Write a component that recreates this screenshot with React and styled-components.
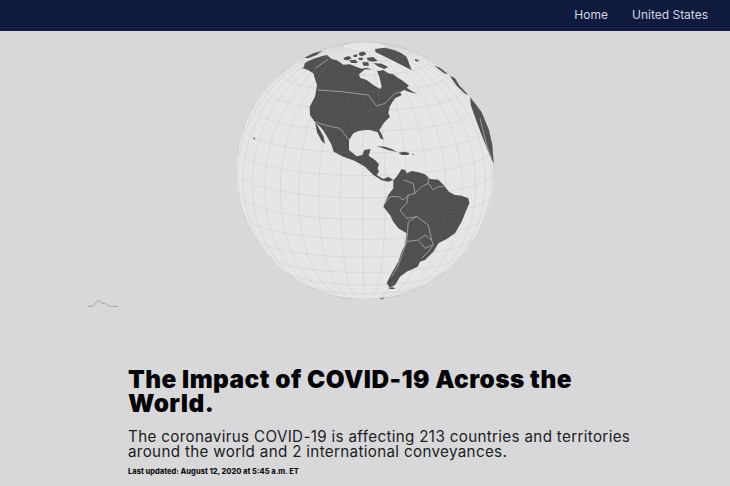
import React from "react";
import styled, { createGlobalStyle } from "styled-components";

const GlobalStyle = createGlobalStyle`
    html, body {
        margin: 0;
        height: 100%;
        overflow: hidden;
        background: #d8d8da;
        font-family: "Inter", "Liberation Sans", sans-serif;
    }
`;

const Page = styled.div`
    height: 486px;
    display: flex;
    flex-direction: column;
    background: #d8d8da;
`;

const Header = styled.header`
    height: 31px;
    flex: none;
    background: #0e1a3e;
    display: flex;
    align-items: center;
    justify-content: flex-end;
    gap: 24px;
    padding: 0 22px 2px 0;
    box-sizing: border-box;
`;

const NavLink = styled.a`
    color: #d5d8e2;
    font-size: 12px;
    font-weight: 400;
`;

const Hero = styled.section`
    position: relative;
    display: flex;
    justify-content: center;
    padding-top: 4px;
`;

const GlobeSvg = styled.svg`
    width: 280px;
    height: 270px;
    display: block;
`;

const Sphere = styled.circle`
    fill: #e6e6e8;
    stroke: #dadadc;
    stroke-width: 2;
`;

const Grid = styled.path`
    fill: none;
    stroke: rgba(130, 130, 135, 0.2);
    stroke-width: 2;
`;

const Land = styled.path`
    fill: #505050;
`;

const Lake = styled.path`
    fill: #e6e6e8;
`;

const Border = styled.path`
    fill: none;
    stroke: #ababab;
    stroke-width: 2.5;
    stroke-linejoin: round;
`;

const Spark = styled.svg`
    position: absolute;
    left: 87px;
    top: 266px;
    width: 32px;
    height: 12px;
`;

const Intro = styled.div`
    padding: 62px 90px 0 128px;
    color: #000;
`;

const Title = styled.h1`
    margin: 0;
    max-width: 460px;
    font-size: 24.4px;
    line-height: 24px;
    font-weight: 900;
    letter-spacing: 0.46px;
`;

const Lead = styled.p`
    margin: 14px 0 0;
    max-width: 510px;
    font-size: 15.2px;
    line-height: 15px;
    font-weight: 400;
    letter-spacing: 0.33px;
    color: #1c1c1e;
`;

const Updated = styled.p`
    margin: 8px 0 0;
    font-size: 7.5px;
    line-height: 10px;
    font-weight: 800;
    color: #111;
`;

// orthographic projection, in the svg's own units
const CX = 420;
const CY = 408;
const R = 387;
const LON0 = -89;
const LAT0 = 12;
const rad = Math.PI / 180;

function project(lon, lat) {
    const l = (lon - LON0) * rad;
    const p = lat * rad;
    const p0 = LAT0 * rad;
    const depth = Math.sin(p0) * Math.sin(p) + Math.cos(p0) * Math.cos(p) * Math.cos(l);
    const x = CX + R * Math.cos(p) * Math.sin(l);
    const y = CY - R * (Math.cos(p0) * Math.sin(p) - Math.sin(p0) * Math.cos(p) * Math.cos(l));
    return depth >= 0 ? [x, y] : null;
}

function line(points) {
    let d = "";
    let open = false;
    points.forEach(pt => {
        if (!pt) {
            open = false;
            return;
        }
        d += `${open ? "L" : "M"}${pt[0].toFixed(1)} ${pt[1].toFixed(1)}`;
        open = true;
    });
    return d;
}

function graticule() {
    let d = "";
    for (let lon = -180; lon < 180; lon += 10) {
        const pts = [];
        for (let lat = -80; lat <= 80; lat += 2) pts.push(project(lon, lat));
        d += line(pts);
    }
    for (let lat = -80; lat <= 80; lat += 10) {
        const pts = [];
        for (let lon = -180; lon <= 180; lon += 2) pts.push(project(lon, lat));
        d += line(pts);
    }
    return d;
}

const northAmerica =
    "M215 108L228 103L236 97L240 84L250 78L270 70L290 64L306 60L320 72L335 76L345 82L355 89L375 88L395 96L410 101L425 98L440 104L462 108L475 105L490 115L505 118L518 128L530 135L552 152L545 158L560 168L577 176L555 172L538 165L525 172L530 180L510 190L500 205L494 215L490 235L495 246L484 256L476 265L463 285L470 298L476 314L466 310L458 292L436 285L420 285L400 288L385 295L372 315L372 345L395 364L412 360L418 345L437 342L431 362L450 375L462 388L458 400L462 410L455 420L475 432L490 425L505 435L490 440L470 436L445 420L420 395L390 378L355 365L326 350L320 330L302 298L290 280L270 262L255 240L254 215L262 200L270 185L276 150L268 125L265 115L250 106L235 100Z";

const baja = "M270 260L285 285L296 305L300 326L290 318L276 292Z";
const hudson = "M402 118L420 103L455 105L463 125L470 155L465 162L445 150L425 135L405 128Z";
const greenland = "M450 42L480 38L510 46L530 55L545 66L552 85L560 106L530 90L500 75L470 60L452 52Z";
const alaskaTip = "M238 68L265 55L292 47L275 60L250 70Z";
const arctic =
    "M355 68L372 63L380 70L368 76L358 74ZM385 60L398 58L395 66L386 66ZM403 52L418 50L424 58L410 64L402 60ZM400 68L414 68L412 76L402 75ZM372 76L392 74L398 84L380 84ZM425 68L445 66L458 78L440 80L428 76ZM445 84L470 86L490 96L478 102L458 94ZM412 82L430 82L432 92L415 92Z";
const iceland = "M570 72L582 76L578 80L570 77Z";
const oldWorld =
    "M628 92L645 98L668 116L660 116L645 106ZM675 122L690 130L702 150L730 180L720 176L695 152L682 134ZM735 186L750 205L770 232L792 285L802 330L806 386L790 350L770 300L755 260L738 212Z";
const caribbean =
    "M455 333L480 335L500 342L516 351L492 346L470 338ZM520 353L540 350L553 354L550 360L530 360ZM560 356L568 357L566 360ZM85 308L90 308L89 314L86 313Z";
const southAmerica =
    "M505 436L515 425L530 402L540 405L546 415L560 408L580 412L600 418L615 432L640 434L652 446L660 455L672 470L690 480L710 482L730 490L733 505L722 530L710 560L690 595L665 612L640 625L625 650L600 675L585 680L578 695L545 710L525 725L510 750L495 758L485 745L500 715L520 680L530 650L540 630L545 595L520 580L505 560L495 540L475 515L490 480L505 460Z";
const tips = "M490 758L505 757L510 762L495 762ZM462 792L480 787L472 793Z";
const borders =
    "M278 165L350 170L430 180L455 213L480 205L510 175L530 170M270 100L310 72M270 260L305 272L345 280L372 315" +
    "M535 435L565 445L570 475L590 455L610 445L610 425M610 445L625 465L640 455L655 455" +
    "M480 505L495 485L520 485L535 495L550 480L570 475M550 480L545 505L525 525L545 550L575 545L610 570L620 615L625 630L610 650L590 670" +
    "M575 545L550 560L545 620L580 615L600 600L620 615M545 620L520 690L500 725M580 615L600 640L622 630" +
    "M765 250L785 330L800 370";

export default function App() {
    return (
        <Page>
            <GlobalStyle />
            <Header>
                <NavLink>Home</NavLink>
                <NavLink>United States</NavLink>
            </Header>
            <Hero>
                <GlobeSvg viewBox="0 0 840 810">
                    <Sphere cx={CX} cy={CY} r={R} />
                    <Land d={northAmerica} />
                    <Land d={baja} />
                    <Lake d={hudson} />
                    <Land d={greenland} />
                    <Land d={alaskaTip} />
                    <Land d={arctic} />
                    <Land d={iceland} />
                    <Land d={oldWorld} />
                    <Land d={caribbean} />
                    <Land d={southAmerica} />
                    <Land d={tips} />
                    <Border d={borders} />
                    <Grid d={graticule()} />
                </GlobeSvg>
                <Spark viewBox="0 0 32 12">
                    <path
                        d="M1 9.500L6 9C8 8 9.500 3.500 11.500 3.500C13.500 3.500 14 6.500 16 6.500C18 6 19 6.500 21 8.500C23 9.500 25 9.500 31 9.500"
                        fill="none"
                        stroke="#a4a4a6"
                        strokeWidth="1"
                    />
                </Spark>
            </Hero>
            <Intro>
                <Title>The Impact of COVID-19 Across the World.</Title>
                <Lead>
                    The coronavirus COVID-19 is affecting 213 countries and territories around the world and 2
                    international conveyances.
                </Lead>
                <Updated>Last updated: August 12, 2020 at 5:45 a.m. ET</Updated>
            </Intro>
        </Page>
    );
}
